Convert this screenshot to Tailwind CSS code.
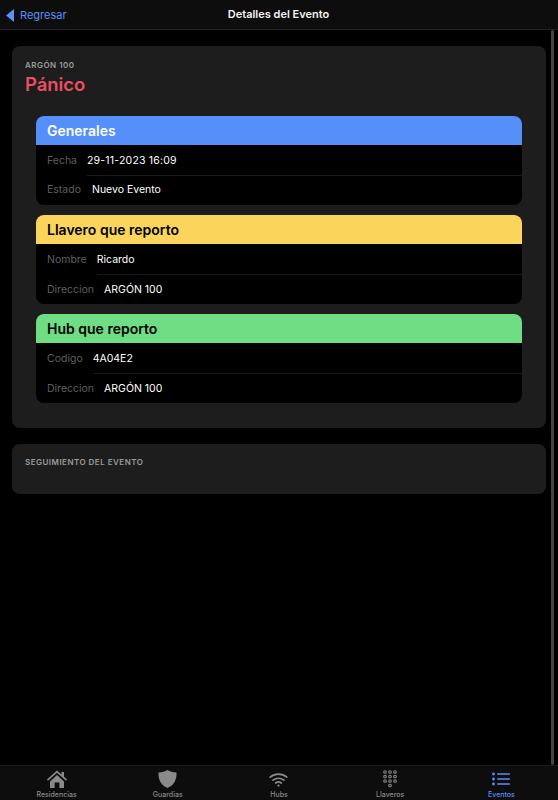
<!DOCTYPE html>
<html lang="es">
<head>
    <meta charset="UTF-8">
    <meta name="viewport" content="width=device-width, initial-scale=1.0">
    <title>Detalles del Evento</title>
    <script src="https://cdn.jsdelivr.net/npm/@tailwindcss/browser@4"></script>
</head>
<body class="bg-black font-['Inter',sans-serif] text-white">
    <div class="relative flex h-[800px] w-[558px] flex-col overflow-hidden">
        <!-- barra superior -->
        <header class="relative flex h-[30px] shrink-0 items-center justify-center border-b border-[#222222] bg-[#0d0d0d]">
            <a class="absolute left-[6px] top-[8px] flex items-center gap-[6px] text-[11px] leading-[14px] text-[#5b8ff9]">
                <svg width="8" height="13" viewBox="0 0 8 13"><path d="M8 0v13L0 6.500z" fill="#5b8ff9"/></svg>
                Regresar
            </a>
            <h1 class="-ml-[1px] text-[11px] font-semibold text-[#f2f2f2]">Detalles del Evento</h1>
        </header>

        <main class="flex-1 px-[12px] pt-[16px]">
            <section class="h-[382px] rounded-lg bg-[#1d1d1d] px-[13px] pt-[14px]">
                <p class="text-[8px] font-semibold leading-[10px] tracking-[0.06em] text-[#9a9a9a]">ARGÓN 100</p>
                <h2 class="mt-[2px] text-[18.400px] font-semibold leading-[24px] text-[#ea5061]">Pánico</h2>

                <div class="mx-[11px] mt-[20px] flex flex-col gap-[10px]">
                    <div class="overflow-hidden rounded-lg bg-black">
                        <div class="flex h-[29px] items-center bg-[#548ffa] px-[11px] text-[14px] font-semibold text-white">Generales</div>
                        <div class="flex h-[30px] items-center pl-[11px] pt-[2px]">
                            <span class="text-[10.5px] text-[#5f5f5f]">Fecha</span>
                            <span class="ml-[10px] text-[10.5px] tracking-[0.2px] text-white">29-11-2023 16:09</span>
                        </div>
                        <div class="ml-[51px] h-px bg-[#1a1a1a]"></div>
                        <div class="flex h-[29px] items-center pb-[1px] pl-[11px]">
                            <span class="text-[10.5px] text-[#5f5f5f]">Estado</span>
                            <span class="ml-[11px] text-[10.5px] text-white">Nuevo Evento</span>
                        </div>
                    </div>

                    <div class="overflow-hidden rounded-lg bg-black">
                        <div class="flex h-[29px] items-center bg-[#fbd55b] px-[11px] text-[14px] font-semibold text-black">Llavero que reporto</div>
                        <div class="flex h-[30px] items-center pl-[11px] pt-[2px]">
                            <span class="text-[10.5px] text-[#5f5f5f]">Nombre</span>
                            <span class="ml-[10px] text-[10.5px] text-white">Ricardo</span>
                        </div>
                        <div class="ml-[61px] h-px bg-[#1a1a1a]"></div>
                        <div class="flex h-[29px] items-center pl-[11px]">
                            <span class="text-[10.5px] text-[#5f5f5f]">Direccion</span>
                            <span class="ml-[10px] text-[10.5px] text-white">ARGÓN 100</span>
                        </div>
                    </div>

                    <div class="overflow-hidden rounded-lg bg-black">
                        <div class="flex h-[29px] items-center bg-[#6fdd83] px-[11px] text-[14px] font-semibold text-black">Hub que reporto</div>
                        <div class="flex h-[30px] items-center pl-[11px] pt-[2px]">
                            <span class="text-[10.5px] text-[#5f5f5f]">Codigo</span>
                            <span class="ml-[10px] text-[10.5px] text-white">4A04E2</span>
                        </div>
                        <div class="ml-[57px] h-px bg-[#1a1a1a]"></div>
                        <div class="flex h-[29px] items-center pl-[11px]">
                            <span class="text-[10.5px] text-[#5f5f5f]">Direccion</span>
                            <span class="ml-[10px] text-[10.5px] text-white">ARGÓN 100</span>
                        </div>
                    </div>
                </div>
            </section>

            <section class="mt-[16px] h-[50px] rounded-lg bg-[#1d1d1d] px-[13px] pt-[13px]">
                <p class="text-[8px] font-semibold leading-[10px] tracking-[0.06em] text-[#9a9a9a]">SEGUIMIENTO DEL EVENTO</p>
            </section>
        </main>

        <!-- barra de scroll -->
        <div class="absolute right-[4px] top-[30px] h-[735px] w-[3px] rounded-full bg-[#444444]"></div>

        <!-- navegacion inferior -->
        <nav class="grid h-[35px] shrink-0 grid-cols-5 border-t border-[#1c1c1c] bg-[#0d0d0d] px-[1px]">
            <div class="flex flex-col items-center pt-[4px] text-[#8a8a8a]">
                <svg width="20" height="18" viewBox="0 0 20 18" fill="currentColor"><path d="M10 .5 0 9.500l1 1.200L10 2.700l9 8 1-1.200-3-2.700V2h-2.500v2.600z"/><path d="M3 11.500 10 5l7 6.500V18h-4.600v-5.500H7.600V18H3z"/></svg>
                <span class="mt-[2px] text-[7px] font-medium leading-[9px]">Residencias</span>
            </div>
            <div class="flex flex-col items-center pt-[4px] text-[#8a8a8a]">
                <svg width="19" height="18" viewBox="0 0 19 18" fill="currentColor"><path d="M9.500 0c2.400 1.600 5.600 2.300 9 2.400.3 7.300-2.300 12.600-9 15.600C2.800 15 .2 9.700.5 2.400 3.900 2.300 7.100 1.600 9.500 0z"/></svg>
                <span class="mt-[2px] text-[7px] font-medium leading-[9px]">Guardias</span>
            </div>
            <div class="flex flex-col items-center pt-[4px] text-[#8a8a8a]">
                <svg width="19" height="18" viewBox="0 0 19 18" fill="none" stroke="currentColor" stroke-width="1.700" stroke-linecap="round"><path d="M1.200 7.200C6 3.200 13 3.200 17.800 7.200"/><path d="M4 10.200c3.200-2.600 7.800-2.600 11 0"/><path d="M6.800 13c1.600-1.200 3.800-1.200 5.400 0"/><circle cx="9.500" cy="15.600" r="1.100" fill="currentColor" stroke="none"/></svg>
                <span class="mt-[2px] text-[7px] font-medium leading-[9px]">Hubs</span>
            </div>
            <div class="flex flex-col items-center pt-[4px] text-[#8a8a8a]">
                <svg width="16" height="18" viewBox="0 0 16 18" fill="none" stroke="currentColor" stroke-width="1.100">
                    <circle cx="3" cy="2" r="1.300"/><circle cx="8" cy="2" r="1.300"/><circle cx="13" cy="2" r="1.300"/>
                    <circle cx="3" cy="6.500" r="1.300"/><circle cx="8" cy="6.500" r="1.300"/><circle cx="13" cy="6.500" r="1.300"/>
                    <circle cx="3" cy="11" r="1.300"/><circle cx="8" cy="11" r="1.300"/><circle cx="13" cy="11" r="1.300"/>
                    <circle cx="8" cy="15.500" r="1.300"/>
                </svg>
                <span class="mt-[2px] text-[7px] font-medium leading-[9px]">Llaveros</span>
            </div>
            <div class="flex flex-col items-center pt-[4px] text-[#5b8ff9]">
                <svg width="18" height="18" viewBox="0 0 18 18" fill="currentColor"><circle cx="1.500" cy="4" r="1.400"/><circle cx="1.500" cy="9" r="1.400"/><circle cx="1.500" cy="14" r="1.400"/><rect x="5" y="3.300" width="13" height="1.400" rx=".7"/><rect x="5" y="8.300" width="13" height="1.400" rx=".7"/><rect x="5" y="13.300" width="13" height="1.400" rx=".7"/></svg>
                <span class="mt-[2px] text-[7px] font-medium leading-[9px]">Eventos</span>
            </div>
        </nav>
    </div>
</body>
</html>
